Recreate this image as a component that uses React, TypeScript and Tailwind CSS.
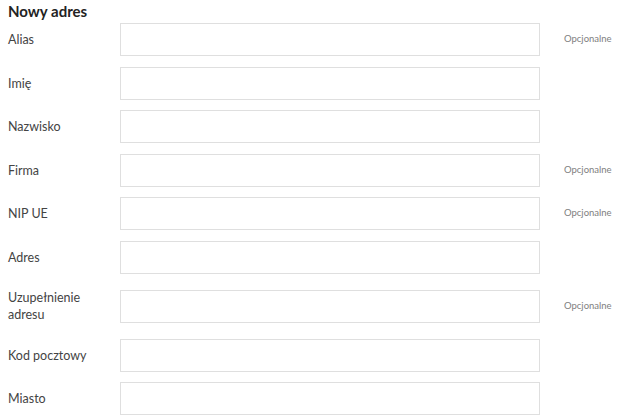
const fields = [
  { label: 'Alias', optional: true },
  { label: 'Imię', optional: false },
  { label: 'Nazwisko', optional: false },
  { label: 'Firma', optional: true },
  { label: 'NIP UE', optional: true },
  { label: 'Adres', optional: false },
  { label: 'Uzupełnienie adresu', optional: true },
  { label: 'Kod pocztowy', optional: false },
  { label: 'Miasto', optional: false },
]

const App = () => {
  return (
    <div className="w-[640px] h-[420px] overflow-hidden bg-white px-2 font-['Lato',sans-serif]">
      <h2 className="text-[15px] leading-[20px] font-bold text-[#232323] pt-[1px] mb-[2px]">
        Nowy adres
      </h2>
      <div className="flex flex-col gap-y-[10.5px]">
        {fields.map(f => (
          <div key={f.label} className="flex items-center">
            <label className="w-[112px] pr-4 py-[5px] text-[12.5px] leading-[17px] text-[#444]">
              {f.label}
            </label>
            <input
              type="text"
              className="w-[420px] h-[33px] border border-[#dfdfdf] bg-white outline-none"
            />
            {f.optional && (
              <span className="ml-[24px] text-[9.5px] text-[#808080]">Opcjonalne</span>
            )}
          </div>
        ))}
      </div>
    </div>
  )
}

export default App
